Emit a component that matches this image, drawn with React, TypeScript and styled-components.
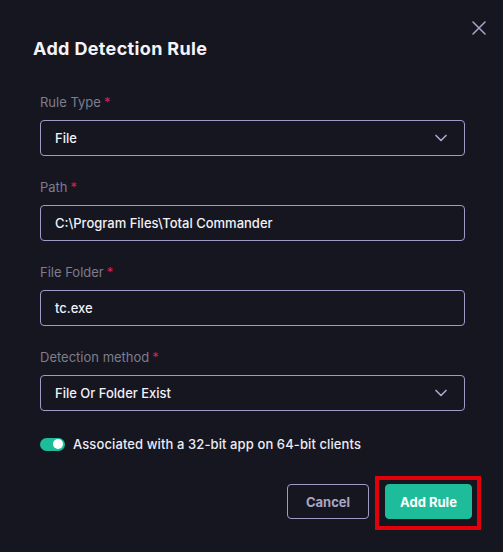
import React from "react";
import styled, { createGlobalStyle } from "styled-components";

const Global = createGlobalStyle`
  html, body { margin: 0; padding: 0; background: #161621; }
  body { font-family: Inter, "Noto Sans", sans-serif; color: #f1f1f6; }
  * { box-sizing: border-box; }
`;

const Dialog = styled.div`
  width: 503px;
  height: 552px;
  background: #161621;
  display: flex;
  flex-direction: column;
`;

const Header = styled.div`
  display: flex;
  justify-content: space-between;
  align-items: flex-start;
  padding: 21px 17px 0 33px;
`;

const Title = styled.h2`
  margin: 14px 0 0;
  font-size: 18px;
  line-height: 27px;
  font-weight: 700;
  letter-spacing: 0.35px;
  color: #f4f4f8;
`;

const CloseButton = styled.button`
  width: 14px;
  height: 14px;
  padding: 0;
  border: none;
  background: none;
  display: flex;
  cursor: pointer;
  color: #a6a6c8;
`;

const Form = styled.div`
  display: flex;
  flex-direction: column;
  gap: 21px;
  padding: 30px 38px 0 40px;
`;

const Field = styled.div`
  display: flex;
  flex-direction: column;
  gap: 8px;
`;

const Label = styled.label`
  font-size: 13px;
  line-height: 20px;
  color: #7d7d8b;
  font-weight: 400;
`;

const Required = styled.span`
  color: #d0245c;
  margin-left: 3px;
`;

const Box = styled.div`
  height: 36px;
  border: 1px solid #9d9cc6;
  border-radius: 4px;
  display: flex;
  align-items: center;
  justify-content: space-between;
  padding: 0 13px 0 14px;
  font-size: 13px;
  font-weight: 500;
  color: #f1f1f6;
`;

const Chevron = styled.span`
  display: flex;
  color: #a9a8d0;
`;

const ToggleRow = styled.div`
  display: flex;
  align-items: center;
  gap: 8px;
  height: 20px;
  margin-top: 2px;
  font-size: 13px;
  font-weight: 500;
  letter-spacing: 0.1px;
  color: #ececf2;
`;

const Toggle = styled.span<{ $on: boolean }>`
  width: 25px;
  height: 13px;
  border-radius: 7px;
  background: ${(p) => (p.$on ? "#1dbd9b" : "#44445a")};
  display: flex;
  align-items: center;
  justify-content: ${(p) => (p.$on ? "flex-end" : "flex-start")};
  padding: 0 2px;
  &::after {
    content: "";
    width: 10px;
    height: 10px;
    border-radius: 50%;
    background: #ffffff;
  }
`;

const Footer = styled.div`
  display: flex;
  justify-content: flex-end;
  gap: 16px;
  padding: 30px 31px 0 0;
`;

const Button = styled.button<{ $primary?: boolean }>`
  height: 35px;
  width: ${(p) => (p.$primary ? "87px" : "82px")};
  padding: 0;
  border-radius: 4px;
  font-family: Inter, "Noto Sans", sans-serif;
  font-size: 13px;
  font-weight: 700;
  cursor: pointer;
  position: relative;
  border: 1px solid ${(p) => (p.$primary ? "#1dbd9b" : "#9d9cc6")};
  background: ${(p) => (p.$primary ? "#1dbd9b" : "transparent")};
  color: ${(p) => (p.$primary ? "#ffffff" : "#a7a6c2")};
`;

const Highlight = styled.span`
  position: absolute;
  top: -9px;
  bottom: -12px;
  left: -11px;
  right: -10px;
  border: 4px solid #e2000b;
  pointer-events: none;
`;

const ChevronIcon = () => (
  <svg width="20" height="20" viewBox="0 0 24 24" fill="none" stroke="currentColor" strokeWidth="2" strokeLinecap="round" strokeLinejoin="round">
    <path d="m6 9 6 6 6-6" />
  </svg>
);

const CloseIcon = () => (
  <svg width="14" height="14" viewBox="0 0 14 14" fill="none" stroke="currentColor" strokeWidth="1.5" strokeLinecap="round">
    <path d="M1 1 13 13M13 1 1 13" />
  </svg>
);

type FieldDef = { label: string; value: string; select?: boolean };

const fields: FieldDef[] = [
  { label: "Rule Type", value: "File", select: true },
  { label: "Path", value: "C:\\Program Files\\Total Commander" },
  { label: "File Folder", value: "tc.exe" },
  { label: "Detection method", value: "File Or Folder Exist", select: true },
];

export default function App() {
  return (
    <>
      <Global />
      <Dialog>
        <Header>
          <Title>Add Detection Rule</Title>
          <CloseButton aria-label="Close">
            <CloseIcon />
          </CloseButton>
        </Header>
        <Form>
          {fields.map((f) => (
            <Field key={f.label}>
              <Label>
                {f.label}
                <Required>*</Required>
              </Label>
              <Box>
                <span>{f.value}</span>
                {f.select && (
                  <Chevron>
                    <ChevronIcon />
                  </Chevron>
                )}
              </Box>
            </Field>
          ))}
          <ToggleRow>
            <Toggle $on />
            <span>Associated with a 32-bit app on 64-bit clients</span>
          </ToggleRow>
        </Form>
        <Footer>
          <Button>Cancel</Button>
          <Button $primary>
            Add Rule
            <Highlight />
          </Button>
        </Footer>
      </Dialog>
    </>
  );
}
